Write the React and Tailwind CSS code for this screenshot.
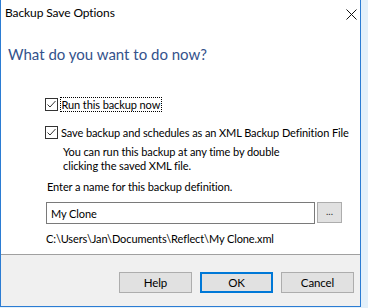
function CheckBox() {
  return (
    <span className="w-[13px] h-[13px] border border-[#333333] bg-white flex items-center justify-center shrink-0">
      <svg width="11" height="11" viewBox="0 0 11 11">
        <polyline points="1.5,5.5 4,8 9.5,2" fill="none" stroke="#333333" strokeWidth="1" />
      </svg>
    </span>
  );
}

function DlgButton({ children, primary }) {
  return (
    <button
      className={
        "w-[73px] h-[21px] bg-[#e1e1e1] text-[11.5px] text-black flex items-center justify-center " +
        (primary ? "border-2 border-[#0078d7]" : "border border-[#adadad]")
      }
    >
      {children}
    </button>
  );
}

export default function App() {
  return (
    <div className="w-[368px] h-[308px] bg-[#e3f0fa] font-['Lato',sans-serif] text-[11px] text-black leading-[15px] whitespace-nowrap tracking-[-0.1px]">
      <div className="w-[361px] h-[307px] bg-white border-l border-b border-r border-[#2b7cd3] flex flex-col">
        {/* Title bar */}
        <div className="h-[30px] flex items-start justify-between pl-[4px] pr-[2px]">
          <span className="text-[12px] mt-[5px] tracking-[-0.1px]">Backup Save Options</span>
          <svg width="11" height="11" viewBox="0 0 11 11" className="mt-[9px] mr-[1px]">
            <path d="M0.5 0.5 L10.5 10.5 M10.5 0.5 L0.5 10.5" stroke="#111" strokeWidth="1" />
          </svg>
        </div>

        {/* Body */}
        <div className="flex-1 flex flex-col">
          <div className="mt-[14px] ml-[7px] text-[15px] leading-[20px] text-[#34528c] tracking-normal">
            What do you want to do now?
          </div>

          <div className="ml-[44px] mt-[33px] flex flex-col">
            <label className="flex items-center gap-[2px] h-[15px]">
              <CheckBox />
              <span className="border border-dotted border-black px-[0.5px] leading-[13px]">Run this backup now</span>
            </label>
            <label className="flex items-center gap-[3px] h-[15px] mt-[13px]">
              <CheckBox />
              <span>Save backup and schedules as an XML Backup Definition File</span>
            </label>
            <p className="ml-[18px] mt-[5px] leading-[14px]">
              You can run this backup at any time by double
              <br />
              clicking the saved XML file.
            </p>
          </div>

          <div className="ml-[45px] mt-[6px] flex flex-col">
            <span className="ml-[1px]">Enter a name for this backup definition.</span>
            <div className="flex items-start gap-[2px] mt-[8px]">
              <div className="w-[269px] h-[22px] border border-[#7a7a7a] flex items-center pl-[4px]">
                My Clone
              </div>
              <button className="w-[25px] h-[21px] bg-[#e1e1e1] border border-[#adadad] text-[10px] flex items-center justify-center text-[#333] pb-[2px]">
                ...
              </button>
            </div>
            <span className="mt-[7px]">C:\Users\Jan\Documents\Reflect\My Clone.xml</span>
          </div>
        </div>

        {/* Button strip */}
        <div className="h-[52px] shrink-0 bg-[#f0f0f0] border-t border-[#a0a0a0] flex items-start justify-end gap-[8px] pt-[17px] pr-[6px]">
          <DlgButton>Help</DlgButton>
          <DlgButton primary>OK</DlgButton>
          <DlgButton>Cancel</DlgButton>
        </div>
      </div>
    </div>
  );
}
